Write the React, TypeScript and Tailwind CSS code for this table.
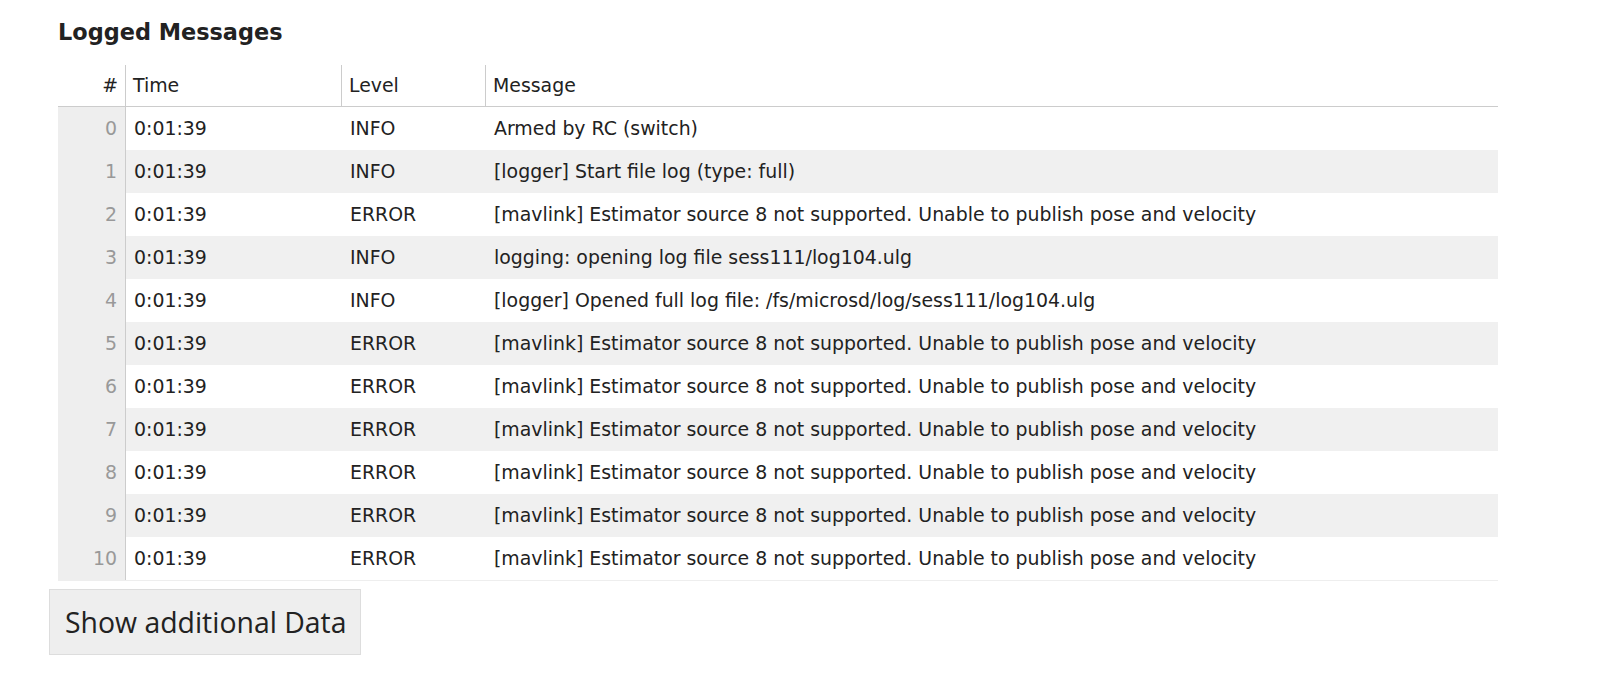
import React from 'react';

type LogRow = { time: string; level: string; message: string };

const MAV = '[mavlink] Estimator source 8 not supported. Unable to publish pose and velocity';

const rows: LogRow[] = [
  { time: '0:01:39', level: 'INFO', message: 'Armed by RC (switch)' },
  { time: '0:01:39', level: 'INFO', message: '[logger] Start file log (type: full)' },
  { time: '0:01:39', level: 'ERROR', message: MAV },
  { time: '0:01:39', level: 'INFO', message: 'logging: opening log file sess111/log104.ulg' },
  { time: '0:01:39', level: 'INFO', message: '[logger] Opened full log file: /fs/microsd/log/sess111/log104.ulg' },
  { time: '0:01:39', level: 'ERROR', message: MAV },
  { time: '0:01:39', level: 'ERROR', message: MAV },
  { time: '0:01:39', level: 'ERROR', message: MAV },
  { time: '0:01:39', level: 'ERROR', message: MAV },
  { time: '0:01:39', level: 'ERROR', message: MAV },
  { time: '0:01:39', level: 'ERROR', message: MAV },
];

const App: React.FC = () => {
  return (
    <div className="min-h-screen bg-white pl-[49px] pt-[21px] text-[#222] font-['DejaVu_Sans',sans-serif]">
      <div className="ml-[9px] w-[1440px]">
        <h2 className="text-[22.4px] font-bold leading-none">Logged Messages</h2>

        {/* Table */}
        <div className="mt-[21.5px] text-[18.9px]">
          {/* Header */}
          <div className="flex h-[42px] border-b border-[#ccc]">
            <div className="flex w-[68px] items-center justify-end border-r border-[#ccc] pr-[7px]">#</div>
            <div className="flex w-[216px] items-center border-r border-[#ccc] pl-[7px]">Time</div>
            <div className="flex w-[144px] items-center border-r border-[#ccc] pl-[7px]">Level</div>
            <div className="flex flex-1 items-center pl-[7px]">Message</div>
          </div>

          {/* Body */}
          <div className="border-b border-[#eee]">
            {rows.map((r, i) => (
              <div key={i} className={`flex h-[43px] ${i % 2 === 1 ? 'bg-[#f0f0f0]' : 'bg-white'}`}>
                <div className="flex w-[68px] items-center justify-end border-r border-[#ccc] bg-[#eee] pb-[1px] pr-[8px] text-[#999]">
                  {i}
                </div>
                <div className="flex w-[216px] items-center pb-[1px] pl-[8px]">{r.time}</div>
                <div className="flex w-[144px] items-center pb-[1px] pl-[8px]">{r.level}</div>
                <div className="flex flex-1 items-center pb-[1px] pl-[8px] whitespace-nowrap">{r.message}</div>
              </div>
            ))}
          </div>
        </div>
      </div>

      <button className="mt-[8px] flex h-[66px] w-[312px] items-center border border-[#ddd] bg-[#eee] pl-[15px] text-[28.4px] text-[#222] font-['Open_Sans',sans-serif]">
        Show additional Data
      </button>
    </div>
  );
};

export default App;
